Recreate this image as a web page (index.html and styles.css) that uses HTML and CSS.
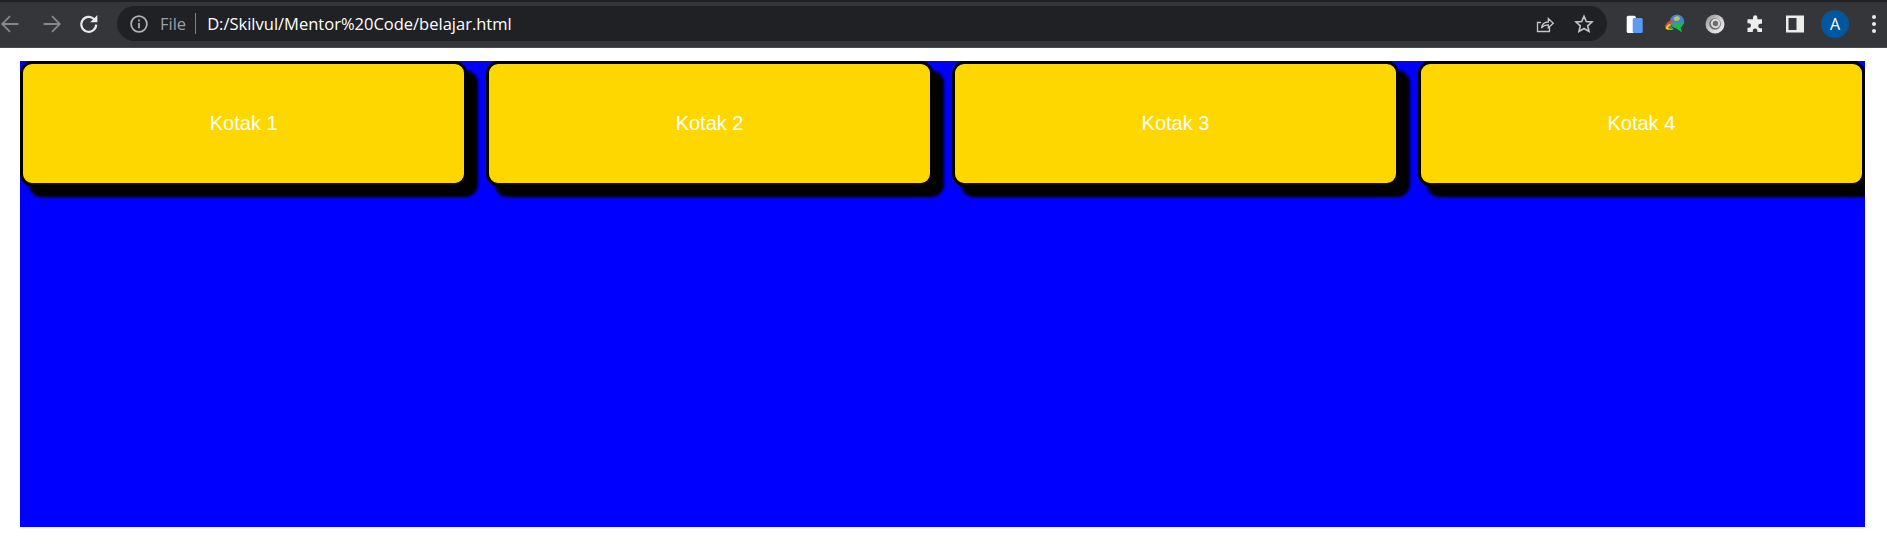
FILE: index.html
```html
<!DOCTYPE html>
<html lang="en">
<head>
  <meta charset="UTF-8">
  <title>belajar.html</title>
  <link rel="stylesheet" href="styles.css">
</head>
<body>
  <div class="topstrip"></div>
  <header class="toolbar">
    <svg class="nav dim" viewBox="0 0 20 20"><path d="M17 10H4M10 3.500L3.500 10l6.500 6.500"/></svg>
    <svg class="nav dim" viewBox="0 0 20 20"><path d="M3 10h13M10 3.500l6.500 6.500-6.500 6.500"/></svg>
    <svg class="nav reload" viewBox="0 0 20 20"><path d="M16 10.500a6.200 6.200 0 1 1-1.800-4.600L16 7.700"/><path class="solid" d="M17 2.600v6h-6z"/></svg>

    <div class="omnibox">
      <svg class="info" viewBox="0 0 16 16"><circle cx="8" cy="8" r="6.300"/><path d="M8 7.200v4.200M8 4.400v1.600"/></svg>
      <span class="scheme">File</span>
      <span class="sep"></span>
      <span class="url">D:/Skilvul/Mentor%20Code/belajar.html</span>
      <svg class="share" viewBox="0 0 20 20"><path d="M14.500 12.500v5H2.500V8.500h3.500"/><path d="M6.500 14c.6-4 3.200-6 6.800-6V4.500l5 4.800-5 4.500v-3c-2.800 0-5 .8-6.800 3.200z"/></svg>
      <svg class="star" viewBox="0 0 20 20"><path d="M10 2.200l2.300 5.300 5.700.5-4.300 3.800 1.300 5.600L10 14.500l-5 2.900 1.300-5.600L2 8l5.700-.5z"/></svg>
    </div>

    <div class="extensions">
      <svg class="ext" viewBox="0 0 20 20">
        <rect x="1.700" y="1.700" width="9" height="17.300" rx="1.500" fill="#fff"/>
        <rect x="7.700" y="4" width="10" height="15" rx="1.500" fill="#5e9bf5"/>
      </svg>
      <svg class="ext" viewBox="0 0 20 20">
        <circle cx="12" cy="7.500" r="7" fill="#3f86d0"/>
        <path d="M9 4c1.500-2 4.500-2.300 5.500-.7s-.5 3.700-2.700 3.700S8 5.800 9 4z" fill="#b4c766"/>
        <path d="M0 14C0 9.500 4 6 9 6 6.500 7.500 5.500 9 5.500 11c-1.500.2-3 .2-3.500 1z" fill="#e04a2a"/>
        <path d="M.5 14.500C1.500 11 3.500 10 5.500 10c0 2 1 3.800 3 5.200-3.500 1-6.500.8-8-.7z" fill="#f0cb30"/>
        <path d="M3 14c.5-1.500 1.500-2.200 2.800-2.400.4 1.300 1 2.400 2 3.400-1.800.3-3.600 0-4.800-1z" fill="#2e8f3f"/>
        <path d="M6 9l14-.5-4.500 4 1.500 6-4-2.800-2.500-2z" fill="#22b83f"/>
      </svg>
      <svg class="ext" viewBox="0 0 20 20">
        <defs>
          <linearGradient id="swirl" x1="0" y1="0" x2="1" y2="1">
            <stop offset="0" stop-color="#8a8a8a"/>
            <stop offset="0.55" stop-color="#d4d4d4"/>
            <stop offset="1" stop-color="#f2f2f2"/>
          </linearGradient>
        </defs>
        <circle cx="10" cy="10" r="9.500" fill="url(#swirl)"/>
        <circle cx="10" cy="10" r="5.800" fill="#6c6c6c"/>
        <circle cx="10.500" cy="9.500" r="3.700" fill="none" stroke="#dcdcdc" stroke-width="2"/>
      </svg>
      <svg class="ext" viewBox="0 0 20 20">
        <path d="M8 3.500a2.200 2.200 0 0 1 4.400 0v1.700h4.600v4.500h-1.500a2.300 2.300 0 0 0 0 4.600H17v3.700h-4.600v-1.200a2.300 2.300 0 0 0-4.600 0V18H2.500v-4.200h1.200a2.300 2.300 0 0 0 0-4.600H2.500v-4H8z" fill="#eceded"/>
      </svg>
      <svg class="ext" viewBox="0 0 20 20">
        <path fill-rule="evenodd" d="M1 1.500h18v17H1zM3.500 4v12h8V4z" fill="#eceded"/>
      </svg>
      <span class="avatar">A</span>
      <span class="dots"><i></i><i></i><i></i></span>
    </div>
  </header>

  <main class="page">
    <div class="canvas">
      <div class="kotak">Kotak 1</div>
      <div class="kotak">Kotak 2</div>
      <div class="kotak">Kotak 3</div>
      <div class="kotak">Kotak 4</div>
    </div>
  </main>
</body>
</html>
```

FILE: styles.css
```css
body {
  margin: 0;
  background: #fff;
  font-family: "Liberation Sans", Arial, sans-serif;
  overflow: hidden;
}

.topstrip {
  height: 2px;
  background: #202124;
}

.toolbar {
  display: flex;
  align-items: center;
  height: 46px;
  box-sizing: border-box;
  padding-bottom: 2px;
  background: #35363a;
  border-bottom: 1px solid #4a4b4f;
  font-family: "Open Sans", "Noto Sans", sans-serif;
  color: #fff;
}

.nav {
  width: 24px;
  height: 24px;
  flex: none;
  fill: none;
  stroke: #e8eaed;
  stroke-width: 1.5;
}
.nav.dim { stroke: #85878a; }
.nav.dim:first-child { margin-left: -2px; }
.nav.dim + .nav.dim { margin-left: 18px; }
.nav.reload { margin-left: 13px; stroke-width: 1.8; }
.nav .solid { fill: #e8eaed; stroke: none; }

.omnibox {
  display: flex;
  align-items: center;
  width: 1490px;
  height: 35px;
  margin-left: 16px;
  padding-left: 12px;
  box-sizing: border-box;
  background: #202124;
  border-radius: 18px;
  font-size: 16.5px;
}

.info {
  width: 20px;
  height: 20px;
  fill: none;
  stroke: #b0b2b5;
  stroke-width: 1.4;
}
.scheme {
  margin-left: 11px;
  color: #9aa0a6;
}
.sep {
  width: 1px;
  height: 21px;
  margin: 0 11px 0 9px;
  background: #7c7f83;
}
.url { color: #fff; }

.share, .star {
  width: 20px;
  height: 20px;
  fill: none;
  stroke: #c4c6c8;
  stroke-width: 1.3;
}
.share { margin-left: auto; }
.star { margin: 0 13px 0 19px; stroke-width: 1.6; }

.extensions {
  display: flex;
  align-items: center;
  margin-left: 18px;
}
.ext {
  width: 20px;
  height: 20px;
  flex: none;
  margin-right: 20px;
}
.avatar {
  display: flex;
  align-items: center;
  justify-content: center;
  width: 28px;
  height: 28px;
  margin-left: -4px;
  border-radius: 50%;
  background: #00579e;
  font-size: 16px;
}
.dots {
  display: flex;
  flex-direction: column;
  gap: 3px;
  margin-left: 23px;
}
.dots i {
  width: 4px;
  height: 4px;
  border-radius: 50%;
  background: #e8eaed;
}

.page {
  padding: 13px 22px 26px 20px;
}

.canvas {
  display: flex;
  gap: 18.6px;
  height: 466px;
  background: #00f;
  overflow: hidden;
}

.kotak {
  display: flex;
  align-items: center;
  justify-content: center;
  flex: 1;
  height: 125px;
  box-sizing: border-box;
  background: #ffd700;
  border: 3px solid #000;
  border-radius: 12px;
  box-shadow: 10px 10px 3px 1px #000;
  color: #fff;
  font-size: 20px;
}
```
